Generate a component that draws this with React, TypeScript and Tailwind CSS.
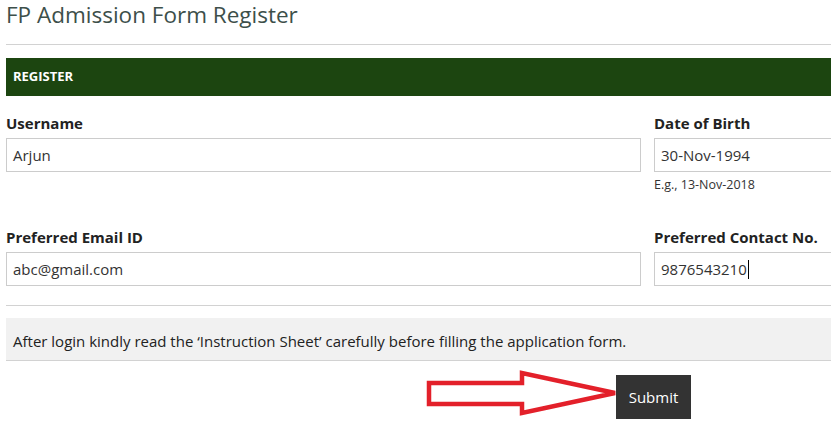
const fields = [
  { label: 'Username', value: 'Arjun', hint: '', caret: false },
  { label: 'Date of Birth', value: '30-Nov-1994', hint: 'E.g., 13-Nov-2018', caret: false },
]

const fields2 = [
  { label: 'Preferred Email ID', value: 'abc@gmail.com', hint: '', caret: false },
  { label: 'Preferred Contact No.', value: '9876543210', hint: '', caret: true },
]

type Field = { label: string; value: string; hint: string; caret: boolean }

function FormField({ f }: { f: Field }) {
  return (
    <div>
      <div className="text-[15px] leading-[20px] font-bold text-[#222]">{f.label}</div>
      <div className="mt-[5px] flex h-[34px] items-center border border-[#ccc] bg-white px-[6px] pt-px text-[15px] text-[#333]">
        <span>{f.value}</span>
        {f.caret && <span className="ml-px h-[19px] w-px bg-black" />}
      </div>
      {f.hint && <div className="mt-[5px] text-[12.5px] leading-[16px] text-[#333]">{f.hint}</div>}
    </div>
  )
}

export default function App() {
  return (
    <div className="h-[423px] w-[831px] overflow-hidden bg-white font-['Open_Sans',sans-serif]">
      <div className="w-[900px] pl-[6px]">
        <h1 className="text-[22.5px] leading-[30px] font-normal text-[#3d4f4a]">FP Admission Form Register</h1>
        <div className="mt-[14px] h-px bg-[#d2d2d2]" />

        <div className="mt-[13px] flex h-[38px] items-center bg-[#1c4510] pl-[7px] text-[13px] font-bold text-white">
          REGISTER
        </div>

        <div className="mt-[17px] grid grid-cols-[635px_1fr] gap-x-[13px]">
          {fields.map((f) => (
            <FormField key={f.label} f={f} />
          ))}
        </div>

        <div className="mt-[34px] grid grid-cols-[635px_1fr] gap-x-[13px]">
          {fields2.map((f) => (
            <FormField key={f.label} f={f} />
          ))}
        </div>

        <div className="mt-[19px] h-px bg-[#d2d2d2]" />

        <div className="mt-[12px] border-b border-[#d2d2d2] bg-[#f1f1f1] pt-[13px] pb-[9px] pl-[7px] text-[15px] leading-[20px] text-[#222]">
          After login kindly read the ‘Instruction Sheet’ carefully before filling the application form.
        </div>

        <div className="mt-[14px] flex items-start">
          <svg className="ml-[420px] mt-[-5px] overflow-visible" width="190" height="46" viewBox="0 0 190 46">
            <polygon
              points="3,13 96,13 96,3 189,23 96,43 96,34 3,34"
              fill="none"
              stroke="#e3202a"
              strokeWidth="4.5"
              strokeLinejoin="miter"
            />
          </svg>
          <button className="flex h-[44px] w-[75px] items-center justify-center bg-[#333] text-[15px] text-white">
            Submit
          </button>
        </div>
      </div>
    </div>
  )
}
